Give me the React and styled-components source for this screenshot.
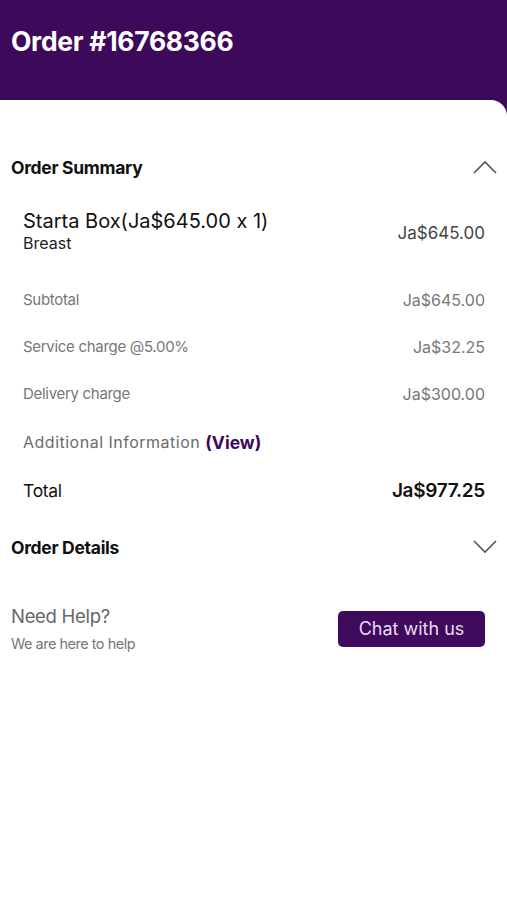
import React from "react";
import styled, { createGlobalStyle } from "styled-components";

const GlobalStyle = createGlobalStyle`
  body {
    margin: 0;
    background: #3d0a5b;
    font-family: Inter, "Liberation Sans", Arial, sans-serif;
    font-feature-settings: "calt" 0;
  }
`;

const Page = styled.div`
  width: 507px;
  min-height: 900px;
  display: flex;
  flex-direction: column;
  background: #3d0a5b;
`;

const Header = styled.header`
  height: 100px;
  padding: 25px 11px 0;
  box-sizing: border-box;
`;

const Title = styled.h1`
  margin: 0;
  color: #fff;
  font-size: 26.5px;
  font-weight: 700;
  letter-spacing: -0.3px;
`;

const Sheet = styled.main`
  flex: 1;
  background: #fff;
  border-top-right-radius: 16px;
  padding: 52px 0 0;
`;

const SectionHead = styled.div`
  display: flex;
  align-items: center;
  justify-content: space-between;
  padding: 0 10px 0 11px;
  height: 30px;
`;

const SectionTitle = styled.h2`
  margin: 0;
  font-size: 17.5px;
  font-weight: 700;
  color: #111;
  letter-spacing: -0.3px;
`;

const Summary = styled.div`
  padding: 18px 22px 0 23px;
`;

const ItemRow = styled.div`
  display: flex;
  justify-content: space-between;
  align-items: center;
  height: 64px;
  margin-bottom: 12px;
`;

const ItemName = styled.div`
  font-size: 20px;
  color: #111;
  line-height: 22px;
`;

const ItemOption = styled.div`
  font-size: 16px;
  color: #222;
  line-height: 22px;
`;

const ItemPrice = styled.div`
  font-size: 17px;
  color: #444;
  margin-top: 2px;
`;

const Line = styled.div`
  display: flex;
  justify-content: space-between;
  align-items: center;
  height: 47px;
  font-size: ${(p) => (p.$total ? "17.5px" : "15px")};
  color: ${(p) => (p.$total ? "#111" : "#777")};
  letter-spacing: -0.3px;
`;

const Amount = styled.span`
  font-size: ${(p) => (p.$bold ? "19px" : "16px")};
  font-weight: ${(p) => (p.$bold ? 600 : 400)};
  letter-spacing: ${(p) => (p.$bold ? "-0.3px" : "0")};
`;

const InfoLine = styled.div`
  height: 50px;
  display: flex;
  align-items: center;
  font-size: 16px;
  color: #6b6b6b;
  letter-spacing: 0.5px;
`;

const ViewLink = styled.span`
  color: #3d0a5b;
  font-size: 17.5px;
  font-weight: 700;
  letter-spacing: 0;
  margin-left: 5px;
`;

const DetailsHead = styled(SectionHead)`
  margin-top: 18px;
`;

const Help = styled.div`
  display: flex;
  justify-content: space-between;
  align-items: center;
  padding: 0 22px 0 11px;
  margin-top: 43px;
`;

const HelpTitle = styled.div`
  font-size: 18.5px;
  line-height: 22px;
  color: #666;
  letter-spacing: -0.3px;
`;

const HelpSub = styled.div`
  font-size: 14.5px;
  line-height: 17px;
  color: #777;
  letter-spacing: -0.5px;
  margin-top: 8px;
`;

const ChatButton = styled.button`
  width: 147px;
  height: 36px;
  border: none;
  border-radius: 5px;
  background: #3f0a5c;
  color: #eadcf2;
  font-family: inherit;
  font-size: 18px;
`;

const Chevron = ({ up }) => (
  <svg width="24" height="16" viewBox="0 0 24 16">
    <path
      d={up ? "M1 14 L12 3 L23 14" : "M1 2 L12 13 L23 2"}
      fill="none"
      stroke="#555"
      strokeWidth="1.6"
    />
  </svg>
);

const lines = [
  { label: "Subtotal", value: "Ja$645.00" },
  { label: "Service charge @5.00%", value: "Ja$32.25" },
  { label: "Delivery charge", value: "Ja$300.00" },
];

export default function App() {
  return (
    <Page>
      <GlobalStyle />
      <Header>
        <Title>Order #16768366</Title>
      </Header>
      <Sheet>
        <SectionHead>
          <SectionTitle>Order Summary</SectionTitle>
          <Chevron up />
        </SectionHead>
        <Summary>
          <ItemRow>
            <div>
              <ItemName>Starta Box(Ja$645.00 x 1)</ItemName>
              <ItemOption>Breast</ItemOption>
            </div>
            <ItemPrice>Ja$645.00</ItemPrice>
          </ItemRow>
          {lines.map((l) => (
            <Line key={l.label}>
              <span>{l.label}</span>
              <Amount>{l.value}</Amount>
            </Line>
          ))}
          <InfoLine>
            Additional Information<ViewLink>(View)</ViewLink>
          </InfoLine>
          <Line $total>
            <span>Total</span>
            <Amount $bold>Ja$977.25</Amount>
          </Line>
        </Summary>
        <DetailsHead>
          <SectionTitle>Order Details</SectionTitle>
          <Chevron />
        </DetailsHead>
        <Help>
          <div>
            <HelpTitle>Need Help?</HelpTitle>
            <HelpSub>We are here to help</HelpSub>
          </div>
          <ChatButton>Chat with us</ChatButton>
        </Help>
      </Sheet>
    </Page>
  );
}
